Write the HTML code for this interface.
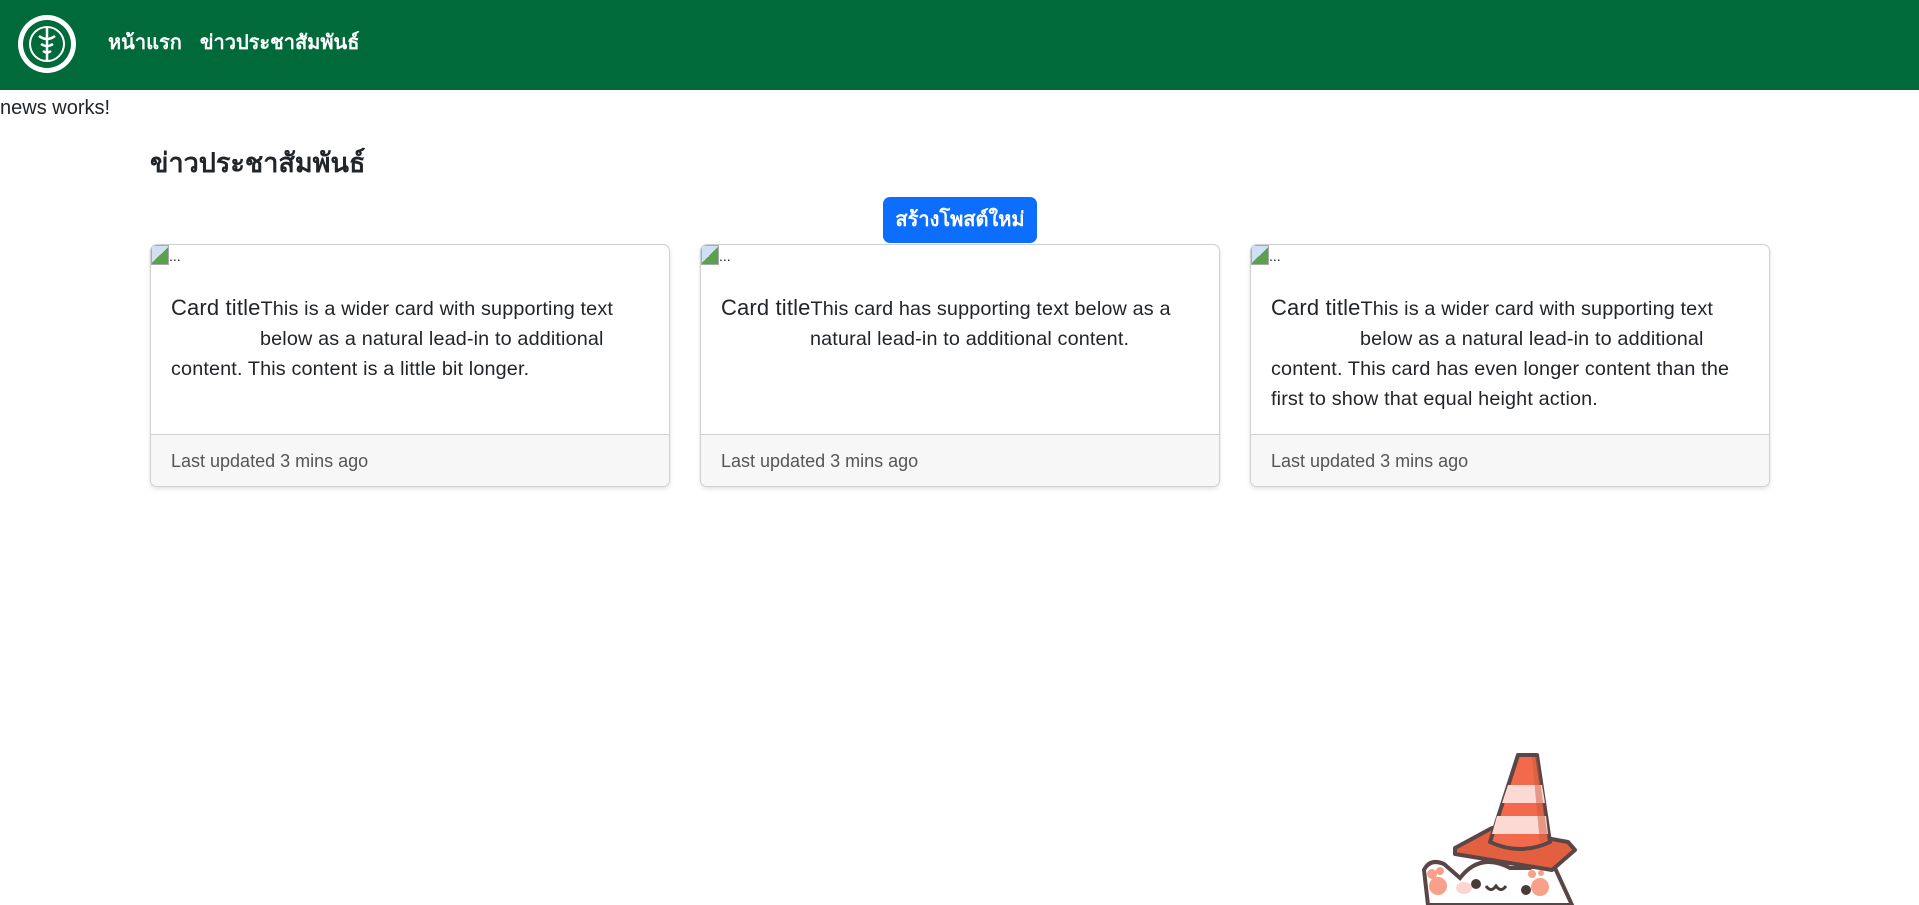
<!DOCTYPE html>
<html><head><meta charset="utf-8"><style>
*{box-sizing:border-box;margin:0;padding:0}
html,body{width:1919px;height:905px;overflow:hidden;background:#fff}
body{font-family:"Liberation Sans","Noto Sans CJK SC",sans-serif;font-size:20px;line-height:1.5;color:#212529;position:relative}
nav{height:90px;background:#006a3a;position:relative}
.logo{position:absolute;left:17px;top:14px;width:60px;height:60px}
.links{position:absolute;left:108px;top:28px;color:#fff;font-size:20px;font-weight:bold}
.links span{margin-right:18px}
.nw{position:absolute;left:0;top:93px}
h4{position:absolute;left:150px;top:143px;font-size:27px;font-weight:bold}
.btn{position:absolute;left:883px;top:197px;width:154px;height:46px;background:#0d6efd;color:#fff;border-radius:7px;font-weight:bold;font-size:20px;text-align:center;line-height:46px}
.card{position:absolute;top:244px;width:520px;height:243px;border:1px solid #d0d0d0;border-radius:7px;box-shadow:0 2px 4px rgba(0,0,0,.12);overflow:hidden}
.img{position:absolute;left:0;top:0;font-size:14px;line-height:18px;display:flex;align-items:flex-end}
.img i{display:inline-block;width:18px;height:20px;background:linear-gradient(135deg,#cfe0f5 50%,#5aa14b 50%);border:1px solid #aaa}
.body{position:absolute;left:20px;top:48px;right:20px;line-height:30px;font-size:19.8px;letter-spacing:.15px}
.t{font-size:22px}
.ind{padding-left:89px}
.foot{position:absolute;left:0;right:0;bottom:0;height:52px;background:#f7f7f7;border-top:1px solid #d0d0d0;padding:0 20px;line-height:52px;color:#555;font-size:18px}
</style></head><body>
<nav>
<svg class="logo" viewBox="0 0 60 60"><circle cx="30" cy="30" r="29" fill="#fff"/><circle cx="30" cy="30" r="24" fill="#006a3a"/><circle cx="30" cy="30" r="17" fill="none" stroke="#fff" stroke-width="2"/><path d="M30 14v32M22 22q8 6 16 0M24 30q6 4 12 0M26 37q4 3 8 0" stroke="#fff" stroke-width="2.5" fill="none"/></svg>
<div class="links"><span>หน้าแรก</span><span>ข่าวประชาสัมพันธ์</span></div>
</nav>
<div class="nw">news works!</div>
<h4>ข่าวประชาสัมพันธ์</h4>
<div class="btn">สร้างโพสต์ใหม่</div>

<div class="card" style="left:150px"><div class="img"><i></i>...</div>
<div class="body"><span class="t">Card title</span>This is a wider card with supporting text<br><span class="ind">below as a natural lead-in to additional</span><br>content. This content is a little bit longer.</div>
<div class="foot">Last updated 3 mins ago</div></div>

<div class="card" style="left:700px"><div class="img"><i></i>...</div>
<div class="body"><span class="t">Card title</span>This card has supporting text below as a<br><span class="ind">natural lead-in to additional content.</span></div>
<div class="foot">Last updated 3 mins ago</div></div>

<div class="card" style="left:1250px"><div class="img"><i></i>...</div>
<div class="body"><span class="t">Card title</span>This is a wider card with supporting text<br><span class="ind">below as a natural lead-in to additional</span><br>content. This card has even longer content than the<br>first to show that equal height action.</div>
<div class="foot">Last updated 3 mins ago</div></div>

<svg style="position:absolute;left:1380px;top:730px" width="240" height="175" viewBox="0 0 240 175">
<path d="M48 175 L44 140 Q50 128 64 134 L80 148 Q100 122 130 138 L150 138 Q165 128 175 138 L192 175Z" fill="#fff" stroke="#5a4646" stroke-width="4"/>
<circle cx="52" cy="144" r="5" fill="#f8a08a"/><circle cx="60" cy="141" r="4" fill="#f8a08a"/><circle cx="58" cy="156" r="9" fill="#f8a08a"/>
<circle cx="152" cy="144" r="4" fill="#f8a08a"/><circle cx="161" cy="143" r="3" fill="#f8a08a"/><circle cx="160" cy="157" r="9" fill="#f8a08a"/>
<circle cx="96" cy="154" r="5" fill="#4a3a3a"/><circle cx="146" cy="160" r="5" fill="#4a3a3a"/><ellipse cx="84" cy="158" rx="8" ry="6" fill="#fbd5d0"/>
<path d="M106 156q5 7 10 0q5 7 10 0" stroke="#4a3a3a" stroke-width="3" fill="none"/>
<path d="M75 118 L112 98 L188 112 L195 120 L172 140 L75 124Z" fill="#e2603f" stroke="#5a4646" stroke-width="4" stroke-linejoin="round"/>
<path d="M110 112 L138 25 L157 25 L170 112 Q140 126 110 112Z" fill="#f26a4b" stroke="#5a4646" stroke-width="4" stroke-linejoin="round"/>
<path d="M128 55 L162 55 L165 73 L122 73Z" fill="#fdd9d3"/><path d="M117 86 L166 86 L168 104 L112 104Z" fill="#fdd9d3"/>
<path d="M152 27 L157 27 L168 110 L160 113Z" fill="#c9573d" opacity=".5"/>
</svg>
</body></html>
